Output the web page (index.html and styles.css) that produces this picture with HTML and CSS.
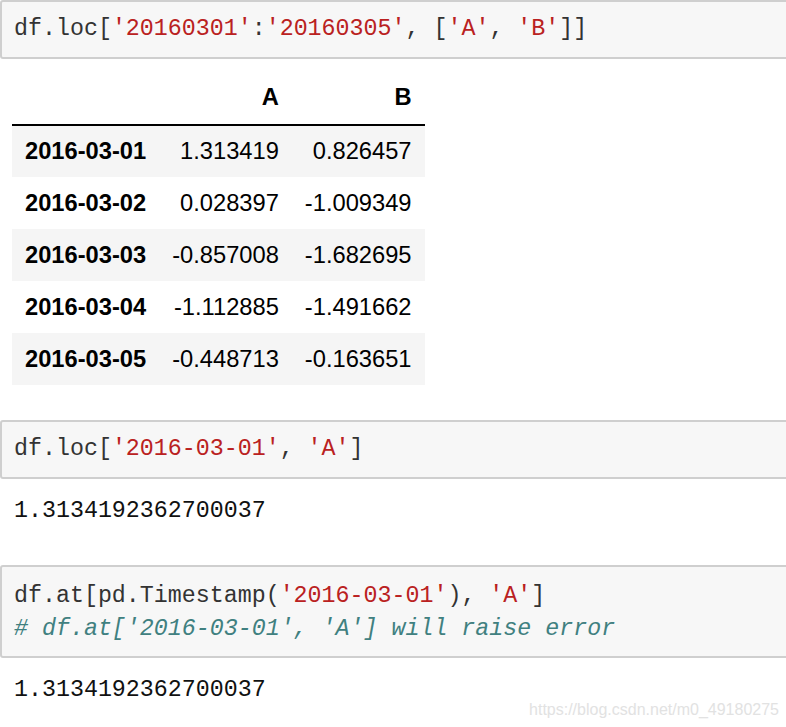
FILE: index.html
```html
<!DOCTYPE html>
<html lang="en">
<head>
<meta charset="UTF-8">
<title>df.loc / df.at</title>
<link rel="stylesheet" href="styles.css">
</head>
<body>
<div class="notebook">
    <div class="cell-input">df.loc[<span class="s">'20160301'</span>:<span class="s">'20160305'</span>, [<span class="s">'A'</span>, <span class="s">'B'</span>]]</div>

    <table class="dataframe">
        <thead>
            <tr><th></th><th>A</th><th>B</th></tr>
        </thead>
        <tbody>
            <tr><th>2016-03-01</th><td>1.313419</td><td>0.826457</td></tr>
            <tr><th>2016-03-02</th><td>0.028397</td><td>-1.009349</td></tr>
            <tr><th>2016-03-03</th><td>-0.857008</td><td>-1.682695</td></tr>
            <tr><th>2016-03-04</th><td>-1.112885</td><td>-1.491662</td></tr>
            <tr><th>2016-03-05</th><td>-0.448713</td><td>-0.163651</td></tr>
        </tbody>
    </table>

    <div class="cell-input second">df.loc[<span class="s">'2016-03-01'</span>, <span class="s">'A'</span>]</div>
    <div class="cell-output">1.3134192362700037</div>

    <div class="cell-input third">df.at[pd.Timestamp(<span class="s">'2016-03-01'</span>), <span class="s">'A'</span>]
<span class="c"># df.at['2016-03-01', 'A'] will raise error</span></div>
    <div class="cell-output">1.3134192362700037</div>
</div>

<!-- marca d'agua do blog -->
<div class="watermark">https://blog.csdn.net/m0_49180275</div>
</body>
</html>
```

FILE: styles.css
```css
body {
    margin: 0;
    padding: 0;
    background-color: #fff;
    font-family: "Liberation Sans", Arial, sans-serif;
    position: relative;
    height: 727px;
    overflow: hidden;
}
.notebook {
    padding: 0;
}
.cell-input {
    background-color: #f7f7f7;
    border: 2px solid #cfcfcf;
    border-radius: 3px;
    margin-right: -10px;
    padding: 11px 12px;
    font-family: "Liberation Mono", "Courier New", monospace;
    font-size: 23.3px;
    line-height: 33px;
    color: #333;
    white-space: pre;
}
.cell-input.second {
    margin-top: 35px;
}
.cell-input.third {
    margin-top: 37px;
    padding: 13px 12px 10px;
}
.s {
    color: #ba2121;
}
.c {
    color: #408080;
    font-style: italic;
}
.cell-output {
    padding: 16px 14px 0;
    font-family: "Liberation Mono", "Courier New", monospace;
    font-size: 23.3px;
    line-height: 33px;
    color: #111;
    white-space: pre;
}

/* tabela do dataframe */
.dataframe {
    margin: 12px 0 0 12px;
    border-collapse: collapse;
    font-size: 23.7px;
    color: #000;
}
.dataframe th,
.dataframe td {
    height: 52px;
    padding: 0 13px;
    text-align: right;
    box-sizing: border-box;
}
.dataframe thead th {
    border-bottom: 2px solid #000;
    height: 54px;
    font-weight: bold;
}
.dataframe tbody th {
    text-align: left;
    font-weight: bold;
}
.dataframe tbody tr:nth-child(odd) {
    background-color: #f5f5f5;
}

.watermark {
    position: absolute;
    right: 7px;
    bottom: 8px;
    font-size: 16px;
    color: #e2e2e2;
}
```
